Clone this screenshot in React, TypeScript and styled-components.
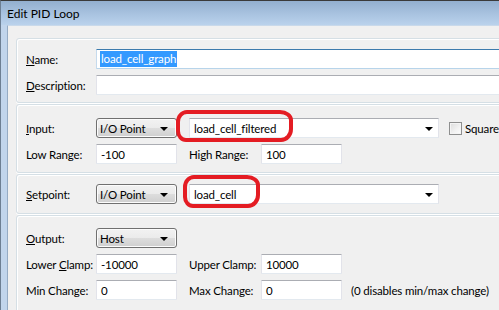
import React from 'react';
import styled, { createGlobalStyle } from 'styled-components';

const GlobalStyle = createGlobalStyle`
  html, body {
    margin: 0;
    padding: 0;
    background: #ffffff;
  }
  body {
    font-family: Lato, 'Liberation Sans', sans-serif;
    font-size: 11.5px;
    letter-spacing: -0.15px;
    color: #000;
  }
`;

const Viewport = styled.div`
  width: 499px;
  height: 310px;
  overflow: hidden;
`;

const Window = styled.div`
  width: 620px;
  height: 340px;
  display: flex;
  flex-direction: column;
  border-left: 1px solid #6d7f93;
  border-top: 1px solid #3a3a3a;
  background: #c1d5ec;
`;

const TitleBar = styled.div`
  height: 24px;
  display: flex;
  align-items: center;
  padding-left: 6px;
  padding-top: 1px;
  box-sizing: border-box;
  background: linear-gradient(to bottom, #93afcf 0%, #a9c3e0 55%, #bad2ec 100%);
  font-size: 12px;
  letter-spacing: 0;
`;

const Frame = styled.div`
  flex: 1;
  display: flex;
  padding-left: 6px;
`;

const Client = styled.div`
  flex: 1;
  border-left: 1px solid #95abc4;
  border-top: 1px solid #c9d9ea;
  background: #f0f0f0;
  padding: 12px 0 0 8px;
  display: flex;
  flex-direction: column;
  gap: 1px;
`;

const Panel = styled.div<{ $top: number; $bottom: number; $gap?: number }>`
  position: relative;
  border: 1px solid #d5dfe5;
  border-radius: 3px;
  box-shadow: 0 1px 0 #ffffff, inset 1px 1px 0 #ffffff;
  padding: ${(p) => p.$top}px 0 ${(p) => p.$bottom}px 9px;
  display: flex;
  flex-direction: column;
  gap: ${(p) => p.$gap ?? 6}px;
`;

const Row = styled.div`
  display: flex;
  align-items: center;
  height: 20px;
`;

const Label = styled.div<{ $w: number; $ml?: number }>`
  width: ${(p) => p.$w}px;
  margin-left: ${(p) => p.$ml ?? 0}px;
  flex-shrink: 0;
  white-space: nowrap;
  padding-top: 1px;
`;

const TextBox = styled.div<{ $w?: number; $focused?: boolean }>`
  box-sizing: border-box;
  height: 20px;
  width: ${(p) => (p.$w ? `${p.$w}px` : 'auto')};
  flex: ${(p) => (p.$w ? '0 0 auto' : '1')};
  margin-right: ${(p) => (p.$w ? 0 : 10)}px;
  background: #fff;
  border: 1px solid ${(p) => (p.$focused ? '#c5daed' : '#e2e3ea')};
  border-top-color: ${(p) => (p.$focused ? '#3d7bad' : '#abadb3')};
  border-bottom-color: ${(p) => (p.$focused ? '#b7d4ea' : '#e3e9ef')};
  border-radius: 1px;
  display: flex;
  align-items: center;
  padding-left: 4px;
  white-space: nowrap;
`;

const Selected = styled.span`
  background: #3399ff;
  color: #fff;
  padding: 1px 1px 2px;
  margin-left: -1px;
`;

const Arrow = styled.span`
  width: 0;
  height: 0;
  margin-left: auto;
  border-left: 4px solid transparent;
  border-right: 4px solid transparent;
  border-top: 4px solid #000;
`;

const Combo = styled.div<{ $w: number }>`
  box-sizing: border-box;
  width: ${(p) => p.$w}px;
  height: 20px;
  border: 1px solid #707070;
  border-radius: 3px;
  background: linear-gradient(to bottom, #f2f2f2 0%, #ebebeb 50%, #dddddd 51%, #cfcfcf 100%);
  box-shadow: inset 0 0 0 1px #fcfcfc;
  display: flex;
  align-items: center;
  padding: 1px 8px 0 3px;
  flex-shrink: 0;
`;

const EditCombo = styled.div<{ $w: number; $ml: number }>`
  position: relative;
  box-sizing: border-box;
  width: ${(p) => p.$w}px;
  height: 20px;
  margin-left: ${(p) => p.$ml}px;
  background: #fff;
  border: 1px solid #e2e3ea;
  border-top-color: #abadb3;
  border-bottom-color: #e3e9ef;
  display: flex;
  align-items: center;
  padding: 1px 5px 0 4px;
  flex-shrink: 0;
`;

const Marker = styled.div<{ $l: number; $t: number; $w: number; $h: number }>`
  position: absolute;
  left: ${(p) => p.$l}px;
  top: ${(p) => p.$t}px;
  width: ${(p) => p.$w}px;
  height: ${(p) => p.$h}px;
  box-sizing: border-box;
  border: 4px solid #e41c23;
  border-radius: 11px 13px 12px 10px / 12px 10px 13px 11px;
  pointer-events: none;
`;

const CheckLabel = styled.label`
  display: flex;
  align-items: center;
  gap: 3px;
  margin-left: 10px;
  white-space: nowrap;
`;

const CheckBox = styled.span`
  box-sizing: border-box;
  width: 13px;
  height: 13px;
  border: 1px solid #8e8f8f;
  background: linear-gradient(135deg, #dcdcdc 0%, #f2f2f2 60%, #fdfdfd 100%);
  box-shadow: inset 0 0 0 1px #f4f4f4;
`;

const Note = styled.div`
  margin-left: 9px;
  white-space: nowrap;
  padding-top: 1px;
`;

export default function App() {
  return (
    <Viewport>
      <GlobalStyle />
      <Window>
        <TitleBar>Edit PID Loop</TitleBar>
        <Frame>
          <Client>
            <Panel $top={10} $bottom={7}>
              <Row>
                <Label $w={70}>
                  <u>N</u>ame:
                </Label>
                <TextBox $focused>
                  <Selected>load_cell_graph</Selected>
                </TextBox>
              </Row>
              <Row>
                <Label $w={70}>
                  <u>D</u>escription:
                </Label>
                <TextBox />
              </Row>
            </Panel>

            <Panel $top={13} $bottom={8}>
              <Row>
                <Label $w={70}>
                  <u>I</u>nput:
                </Label>
                <Combo $w={81}>
                  I/O Point
                  <Arrow />
                </Combo>
                <EditCombo $w={250} $ml={12}>
                  load_cell_filtered
                  <Arrow />
                  <Marker $l={-14} $t={-9} $w={117} $h={32} />
                </EditCombo>
                <CheckLabel>
                  <CheckBox />
                  Square
                </CheckLabel>
              </Row>
              <Row>
                <Label $w={70}>Low Range:</Label>
                <TextBox $w={81}>-100</TextBox>
                <Label $w={72} $ml={12}>
                  High Range:
                </Label>
                <TextBox $w={81}>100</TextBox>
              </Row>
            </Panel>

            <Panel $top={9} $bottom={9}>
              <Row>
                <Label $w={70}>
                  <u>S</u>etpoint:
                </Label>
                <Combo $w={81}>
                  I/O Point
                  <Arrow />
                </Combo>
                <EditCombo $w={250} $ml={12}>
                  load_cell
                  <Arrow />
                  <Marker $l={-7} $t={-10} $w={77} $h={33} />
                </EditCombo>
              </Row>
            </Panel>

            <Panel $top={12} $bottom={12}>
              <Row>
                <Label $w={70}>
                  <u>O</u>utput:
                </Label>
                <Combo $w={81}>
                  Host
                  <Arrow />
                </Combo>
              </Row>
              <Row>
                <Label $w={70}>
                  Lower <u>C</u>lamp:
                </Label>
                <TextBox $w={81}>-10000</TextBox>
                <Label $w={72} $ml={12}>
                  Upper Clamp:
                </Label>
                <TextBox $w={81}>10000</TextBox>
              </Row>
              <Row>
                <Label $w={70}>Min Change:</Label>
                <TextBox $w={81}>0</TextBox>
                <Label $w={72} $ml={12}>
                  Max Change:
                </Label>
                <TextBox $w={81}>0</TextBox>
                <Note>(0 disables min/max change)</Note>
              </Row>
            </Panel>
          </Client>
        </Frame>
      </Window>
    </Viewport>
  );
}
